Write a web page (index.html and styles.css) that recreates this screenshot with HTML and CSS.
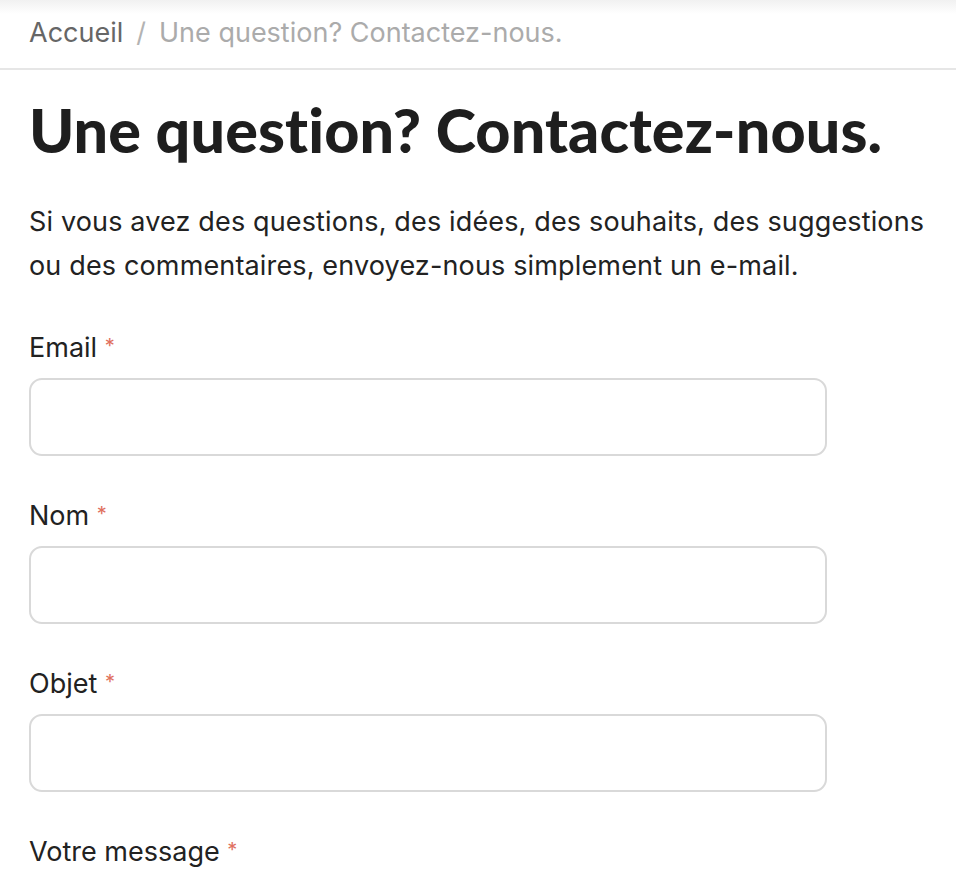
FILE: index.html
```html
<!DOCTYPE html>
<html lang="fr">
<head>
<meta charset="utf-8">
<title>Contact</title>
<link rel="stylesheet" href="styles.css">
</head>
<body>
<nav class="crumbs">
  <a class="crumb-link" href="#">Accueil</a>
  <span class="crumb-sep">/</span>
  <span class="crumb-current">Une question? Contactez-nous.</span>
</nav>
<main class="page">
  <h1 class="title">Une question? Contactez-nous.</h1>
  <p class="intro">Si vous avez des questions, des idées, des souhaits, des suggestions ou des commentaires, envoyez-nous simplement un e-mail.</p>
  <form class="form">
    <div class="field">
      <label class="label">Email <span class="req">*</span></label>
      <input class="input" type="email">
    </div>
    <div class="field">
      <label class="label">Nom <span class="req">*</span></label>
      <input class="input" type="text">
    </div>
    <div class="field">
      <label class="label">Objet <span class="req">*</span></label>
      <input class="input" type="text">
    </div>
    <div class="field">
      <label class="label">Votre message <span class="req">*</span></label>
      <textarea class="input textarea"></textarea>
    </div>
  </form>
</main>
</body>
</html>
```
FILE: styles.css
```css
html, body {
  margin: 0;
  padding: 0;
  background: #fff;
}
body {
  font-family: Inter, "Noto Sans", sans-serif;
  color: #222;
  overflow: hidden;
}
.crumbs {
  height: 64px;
  border-bottom: 2px solid #e6e6e6;
  display: flex;
  align-items: center;
  gap: 13px;
  padding: 0 29px 4px;
  box-sizing: content-box;
  font-size: 27px;
  background: linear-gradient(#f1f1f1 0, #fff 14px);
}
.crumb-link {
  color: #666;
  text-decoration: none;
}
.crumb-sep {
  color: #b3b3b3;
}
.crumb-current {
  color: #ababab;
}
.page {
  padding: 0 29px;
}
.title {
  font-family: Lato, sans-serif;
  font-weight: 900;
  font-size: 61px;
  line-height: 72px;
  margin: 24px 0 0;
  color: #1e1e1e;
  letter-spacing: 0.1px;
}
.intro {
  font-size: 27px;
  line-height: 44px;
  margin: 34px 0 0;
  max-width: 910px;
  letter-spacing: 0.15px;
}
.form {
  margin-top: 42px;
  width: 798px;
}
.field {
  display: flex;
  flex-direction: column;
  gap: 14px;
  margin-bottom: 42px;
}
.label {
  font-size: 27px;
  line-height: 32px;
}
.req {
  color: #e0705e;
  font-size: 20px;
  vertical-align: 4px;
}
.input {
  height: 78px;
  box-sizing: border-box;
  border: 2px solid #d9d9d9;
  border-radius: 13px;
  background: #fff;
  font-size: 24px;
  padding: 0 16px;
  margin: 0;
}
.textarea {
  height: 200px;
  resize: none;
}
```
